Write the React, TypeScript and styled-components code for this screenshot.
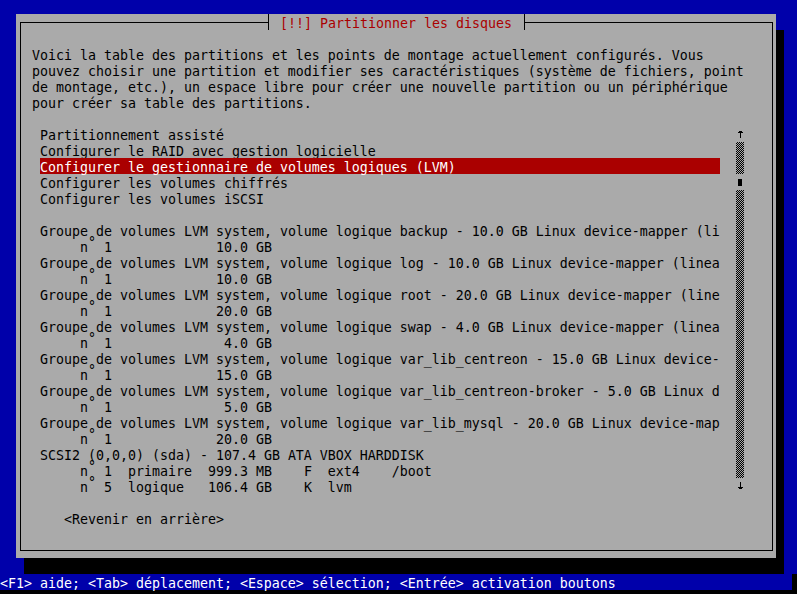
import React from 'react';
import styled, { createGlobalStyle } from 'styled-components';

const BLUE = '#0000aa';
const GRAY = '#aaaaaa';
const RED = '#aa0000';

const GlobalStyle = createGlobalStyle`
  html, body { margin: 0; padding: 0; background: #000; }
  body {
    font-family: "DejaVu Sans Mono", "Liberation Mono", monospace;
    font-size: 13.29px;
  }
`;

const Screen = styled.div`
  width: 797px;
  height: 594px;
  overflow: hidden;
  background: #000;
  display: flex;
  flex-direction: column;
`;

const Desktop = styled.div`
  height: 574px;
  box-sizing: border-box;
  padding: 14px 0 0 16px;
  background: ${BLUE};
`;

const Dialog = styled.section`
  width: 760px;
  height: 544px;
  background: ${GRAY};
  color: #000;
  box-shadow: 8px 16px 0 #000;
  display: flex;
  flex-direction: column;
`;

const TitleRow = styled.header`
  display: flex;
  height: 16px;
  margin: 0 3px 0 4px;
  line-height: 19px;
`;

const LeftSeg = styled.div`
  flex: 0 0 249px;
  background:
    linear-gradient(#000, #000) 0 8px / 100% 1px no-repeat,
    linear-gradient(#000, #000) 0 8px / 1px 8px no-repeat,
    linear-gradient(#000, #000) 100% 0 / 1px 100% no-repeat;
`;

const RightSeg = styled.div`
  flex: 1;
  background:
    linear-gradient(#000, #000) 0 8px / 100% 1px no-repeat,
    linear-gradient(#000, #000) 100% 8px / 1px 8px no-repeat,
    linear-gradient(#000, #000) 0 0 / 1px 100% no-repeat;
`;

const Title = styled.h1`
  flex: 0 0 255px;
  box-sizing: border-box;
  margin: 0;
  padding-left: 11px;
  font: inherit;
  line-height: inherit;
  color: ${RED};
  white-space: pre;
`;

const Body = styled.div`
  flex: 1;
  margin: 0 3px 7px 4px;
  border: 1px solid #000;
  border-top: 0;
  display: flex;
  flex-direction: column;
`;

const Intro = styled.div`
  margin-top: 16px;
  padding-left: 11px;
`;

const Row = styled.div<{ $active?: boolean }>`
  height: 16px;
  line-height: 19px;
  white-space: pre;
  background: ${(p) => (p.$active ? RED : 'transparent')};
  color: ${(p) => (p.$active ? '#ffffff' : 'inherit')};
`;

const Deg = styled.span`
  vertical-align: 5px;
  line-height: 0;
`;

const ListArea = styled.div`
  display: flex;
  gap: 16px;
  margin-top: 16px;
  padding-left: 19px;
`;

const Items = styled.div`
  width: 680px;
  display: flex;
  flex-direction: column;
`;

const Scrollbar = styled.div`
  width: 8px;
  display: flex;
  flex-direction: column;
`;

const Track = styled.div<{ $rows: number }>`
  height: ${(p) => p.$rows * 16}px;
  background: repeating-conic-gradient(#000 0 25%, transparent 0 50%) 0 0 / 2px 2px;
`;

const Cell = styled.div`
  height: 16px;
  display: flex;
  justify-content: center;
`;

const Thumb = styled.div`
  width: 4px;
  height: 7px;
  margin-top: 5px;
  background: #000;
`;

const ButtonRow = styled.div`
  margin-top: 16px;
  padding-left: 43px;
`;

const StatusRow = styled.footer`
  display: flex;
  height: 16px;
`;

const StatusBar = styled.div`
  width: 792px;
  background: ${BLUE};
  color: #ffffff;
  line-height: 19px;
  white-space: pre;
`;

const ArrowUp = () => (
  <svg width="8" height="16" viewBox="0 0 8 16" shapeRendering="crispEdges">
    <rect x="4" y="5" width="1" height="7" fill="#000" />
    <rect x="2" y="6" width="5" height="1" fill="#000" />
    <rect x="3" y="5" width="3" height="1" fill="#000" />
  </svg>
);

const ArrowDown = () => (
  <svg width="8" height="16" viewBox="0 0 8 16" shapeRendering="crispEdges">
    <rect x="4" y="4" width="1" height="7" fill="#000" />
    <rect x="2" y="9" width="5" height="1" fill="#000" />
    <rect x="3" y="10" width="3" height="1" fill="#000" />
  </svg>
);

const intro = [
  'Voici la table des partitions et les points de montage actuellement configurés. Vous',
  'pouvez choisir une partition et modifier ses caractéristiques (système de fichiers, point',
  'de montage, etc.), un espace libre pour créer une nouvelle partition ou un périphérique',
  'pour créer sa table des partitions.',
];

const actions = [
  'Partitionnement assisté',
  'Configurer le RAID avec gestion logicielle',
  'Configurer le gestionnaire de volumes logiques (LVM)',
  'Configurer les volumes chiffrés',
  'Configurer les volumes iSCSI',
];

const volumes: [string, string][] = [
  ['backup - 10.0 GB Linux device-mapper (li', '10.0 GB'],
  ['log - 10.0 GB Linux device-mapper (linea', '10.0 GB'],
  ['root - 20.0 GB Linux device-mapper (line', '20.0 GB'],
  ['swap - 4.0 GB Linux device-mapper (linea', ' 4.0 GB'],
  ['var_lib_centreon - 15.0 GB Linux device-', '15.0 GB'],
  ['var_lib_centreon-broker - 5.0 GB Linux d', ' 5.0 GB'],
  ['var_lib_mysql - 20.0 GB Linux device-map', '20.0 GB'],
];

const partitions: [string, string][] = [
  ['1', '  primaire  999.3 MB    F  ext4    /boot'],
  ['5', '  logique   106.4 GB    K  lvm'],
];

const Num = ({ n, rest }: { n: string; rest: string }) => (
  <Row>
    {'     n'}
    <Deg>°</Deg>
    {' ' + n + rest}
  </Row>
);

export default function App() {
  return (
    <>
      <GlobalStyle />
      <Screen>
        <Desktop>
          <Dialog>
            <TitleRow>
              <LeftSeg />
              <Title>[!!] Partitionner les disques</Title>
              <RightSeg />
            </TitleRow>
            <Body>
              <Intro>
                {intro.map((l) => (
                  <Row key={l}>{l}</Row>
                ))}
              </Intro>
              <ListArea>
                <Items>
                  {actions.map((a, i) => (
                    <Row key={a} $active={i === 2}>
                      {a}
                    </Row>
                  ))}
                  <Row />
                  {volumes.map(([name, size]) => (
                    <React.Fragment key={name}>
                      <Row>{'Groupe de volumes LVM system, volume logique ' + name}</Row>
                      <Num n="1" rest={'             ' + size} />
                    </React.Fragment>
                  ))}
                  <Row>SCSI2 (0,0,0) (sda) - 107.4 GB ATA VBOX HARDDISK</Row>
                  {partitions.map(([n, rest]) => (
                    <Num key={n} n={n} rest={rest} />
                  ))}
                </Items>
                <Scrollbar>
                  <Cell>
                    <ArrowUp />
                  </Cell>
                  <Track $rows={2} />
                  <Cell>
                    <Thumb />
                  </Cell>
                  <Track $rows={18} />
                  <Cell>
                    <ArrowDown />
                  </Cell>
                </Scrollbar>
              </ListArea>
              <ButtonRow>
                <Row>&lt;Revenir en arrière&gt;</Row>
              </ButtonRow>
            </Body>
          </Dialog>
        </Desktop>
        <StatusRow>
          <StatusBar>
            &lt;F1&gt; aide; &lt;Tab&gt; déplacement; &lt;Espace&gt; sélection; &lt;Entrée&gt; activation boutons
          </StatusBar>
        </StatusRow>
      </Screen>
    </>
  );
}
